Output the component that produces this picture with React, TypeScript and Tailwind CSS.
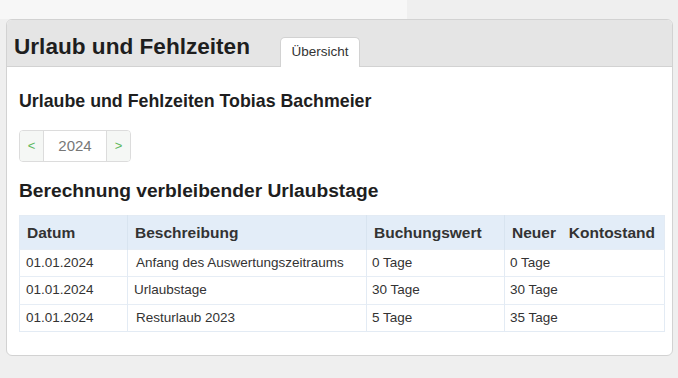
import React from 'react';

const rows = [
  { datum: '01.01.2024', text: 'Anfang des Auswertungszeitraums', pad: 'pl-2', wert: '0 Tage', stand: '0 Tage' },
  { datum: '01.01.2024', text: 'Urlaubstage', pad: 'pl-1.5', wert: '30 Tage', stand: '30 Tage' },
  { datum: '01.01.2024', text: 'Resturlaub 2023', pad: 'pl-2', wert: '5 Tage', stand: '35 Tage' },
];

export default function App() {
  return (
    <div className="h-[378px] bg-[#efefef] font-['Liberation_Sans',Arial,sans-serif] text-[#222]">
      <div className="h-[19px] w-[407px] bg-[#f7f7f7]" />

      <div className="ml-[6px] mr-[5px] h-[337px] rounded-[6px] border border-[#d2d2d2] bg-white overflow-hidden">
        <div className="h-[47px] bg-[#e5e5e5] border-b border-[#d2d2d2] flex items-end pl-[7px]">
          <h1 className="text-[22.6px] font-bold leading-[26px] mb-[6px] text-[#1e1e1e]">Urlaub und Fehlzeiten</h1>
          <div className="ml-[30px] -mb-px h-[30px] w-[80px] rounded-t-[5px] border border-b-0 border-[#d2d2d2] bg-white flex items-center justify-center text-[13.5px] text-[#333]">
            Übersicht
          </div>
        </div>

        <div className="pl-[12px] pt-[23px]">
          <h2 className="text-[17.8px] font-bold leading-[22px] text-[#1e1e1e]">Urlaube und Fehlzeiten Tobias Bachmeier</h2>

          <div className="mt-[18px] flex h-[32px] w-[112px] rounded-[4px] border border-[#dcdcdc] overflow-hidden">
            <div className="w-[24px] flex items-center justify-center bg-[#f5f7f5] text-[#5cb85c] text-[13px] border-r border-[#dcdcdc]">&lt;</div>
            <div className="flex-1 flex items-center justify-center text-[15px] text-[#777]">2024</div>
            <div className="w-[24px] flex items-center justify-center bg-[#f5f7f5] text-[#5cb85c] text-[13px] border-l border-[#dcdcdc]">&gt;</div>
          </div>

          <h2 className="mt-[18px] text-[19.2px] font-bold leading-[22px] text-[#1e1e1e]">Berechnung verbleibender Urlaubstage</h2>

          <table className="mt-[13px] w-[646px] border-collapse border border-[#e3ebf4] text-[13.5px] text-[#333]">
            <thead>
              <tr className="h-[34px] bg-[#e3edf8] text-left text-[15.5px] font-bold text-[#333]">
                <th className="w-[108px] pl-[7px] font-bold border-r border-[#d8e4f0]">Datum</th>
                <th className="w-[239px] pl-[7px] font-bold border-r border-[#d8e4f0]">Beschreibung</th>
                <th className="w-[138px] pl-[7px] font-bold border-r border-[#d8e4f0]">Buchungswert</th>
                <th className="pl-[7px] font-bold">Neuer{'\u00a0\u00a0\u00a0'}Kontostand</th>
              </tr>
            </thead>
            <tbody>
              {rows.map((r, i) => (
                <tr key={i} className={`${i === 1 ? 'h-[28px]' : 'h-[27px]'} border-t border-[#e6edf5]`}>
                  <td className="pl-[6px] border-r border-[#e3ebf4]">{r.datum}</td>
                  <td className={`${r.pad} border-r border-[#e3ebf4]`}>{r.text}</td>
                  <td className="pl-[5px] border-r border-[#e3ebf4]">{r.wert}</td>
                  <td className="pl-[5px]">{r.stand}</td>
                </tr>
              ))}
            </tbody>
          </table>
        </div>
      </div>
    </div>
  );
}
